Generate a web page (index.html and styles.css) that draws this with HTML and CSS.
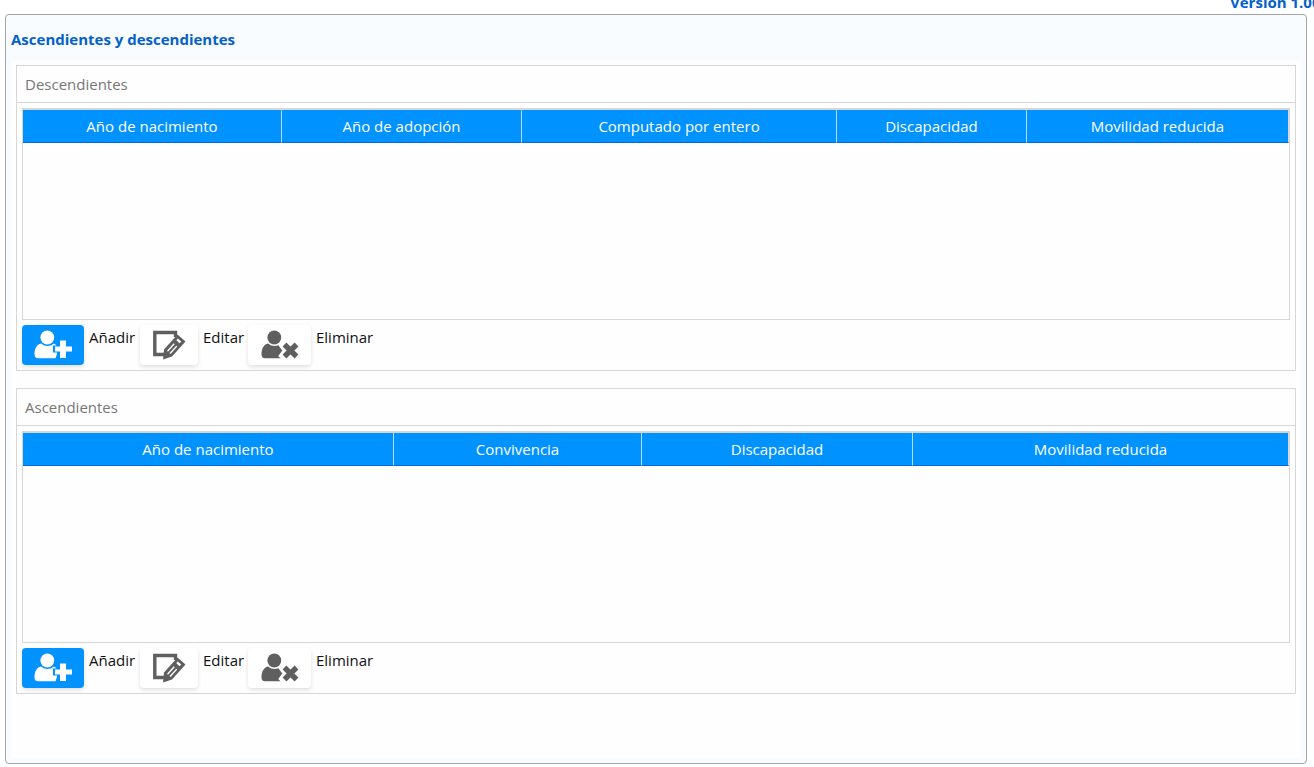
FILE: index.html
```html
<!DOCTYPE html>
<html lang="es">
<head>
<meta charset="utf-8">
<title>Ascendientes y descendientes</title>
<link rel="stylesheet" href="styles.css">
</head>
<body>
<svg class="defs" aria-hidden="true">
  <symbol id="user" viewBox="0 0 38 30">
    <ellipse cx="13.300" cy="7.500" rx="6.900" ry="7"/>
    <path d="M7 13.500C2.500 14.500 .5 19 .5 24.500Q.5 28.200 4 28.200H21.500L23 24V17Q22 14.200 20 13.500Q13.500 18.500 7 13.500Z"/>
  </symbol>
  <symbol id="add" viewBox="0 0 38 30">
    <use href="#user"/>
    <path class="halo" d="M26 10.500h6v6h6v5h-6v6.500h-6v-6.500h-6v-5h6z"/>
    <path d="M26 10.500h6v6h6v5h-6v6.500h-6v-6.500h-5v-5h5z"/>
  </symbol>
  <symbol id="edit" viewBox="0 0 34 30">
    <path d="M13 24.500H2.800V2.500H23.500V7" fill="none" stroke="currentColor" stroke-width="3.400"/>
    <path d="M25.500 4.500L33.500 11.500L20 26.500L11 29.500L12 19.500Z"/>
    <path class="gap" d="M25.800 8.600L24.300 10.300L27.600 13.300L29.200 11.600ZM21.700 13.300L15 20.800L16 21.700L22.700 14.200ZM24.200 15.700L17.500 23.100L18.600 24L25.300 16.600Z"/>
  </symbol>
  <symbol id="remove" viewBox="0 0 38 30">
    <use href="#user"/>
    <path class="halo" d="M18.500 15L22 11.500L27 16V25L22.500 30L18.500 26L22.500 20.500Z" stroke-width="0"/>
    <path d="M23.500 14.500L35.500 26.500M35.500 14.500L23.500 26.500" stroke="currentColor" stroke-width="5.400"/>
  </symbol>
</svg>
<header class="topbar"><span class="version">Versión 1.00</span></header>
<main class="panel">
  <h1 class="title">Ascendientes y descendientes</h1>
  <div class="content">
    <section class="group">
      <h2 class="group-title">Descendientes</h2>
      <div class="group-body">
        <div class="grid">
          <table class="table descendants">
            <thead><tr><th>Año de nacimiento</th><th>Año de adopción</th><th>Computado por entero</th><th>Discapacidad</th><th>Movilidad reducida</th></tr></thead>
          </table>
        </div>
        <div class="actions">
          <button class="btn primary" id="d-add" aria-labelledby="d-add-l"><svg class="icon"><use href="#add"/></svg></button>
          <label class="add-label" id="d-add-l" for="d-add">Añadir</label>
          <button class="btn edit" id="d-edit" aria-labelledby="d-edit-l"><svg class="icon narrow"><use href="#edit"/></svg></button>
          <label class="edit-label" id="d-edit-l" for="d-edit">Editar</label>
          <button class="btn" id="d-del" aria-labelledby="d-del-l"><svg class="icon"><use href="#remove"/></svg></button>
          <label id="d-del-l" for="d-del">Eliminar</label>
        </div>
      </div>
    </section>
    <section class="group">
      <h2 class="group-title">Ascendientes</h2>
      <div class="group-body">
        <div class="grid">
          <table class="table ascendants">
            <thead><tr><th>Año de nacimiento</th><th>Convivencia</th><th>Discapacidad</th><th>Movilidad reducida</th></tr></thead>
          </table>
        </div>
        <div class="actions">
          <button class="btn primary" id="a-add" aria-labelledby="a-add-l"><svg class="icon"><use href="#add"/></svg></button>
          <label class="add-label" id="a-add-l" for="a-add">Añadir</label>
          <button class="btn edit" id="a-edit" aria-labelledby="a-edit-l"><svg class="icon narrow"><use href="#edit"/></svg></button>
          <label class="edit-label" id="a-edit-l" for="a-edit">Editar</label>
          <button class="btn" id="a-del" aria-labelledby="a-del-l"><svg class="icon"><use href="#remove"/></svg></button>
          <label id="a-del-l" for="a-del">Eliminar</label>
        </div>
      </div>
    </section>
  </div>
</main>
</body>
</html>
```
FILE: styles.css
```css
* { box-sizing: border-box; }
body {
  margin: 0;
  min-height: 100vh;
  display: flex;
  flex-direction: column;
  overflow: hidden;
  background: #fff;
  color: #111;
  font: 15px/24px "Open Sans", "Noto Sans", sans-serif;
}
.defs { position: absolute; width: 0; height: 0; }
.topbar {
  height: 14px;
  display: flex;
  justify-content: flex-end;
  align-items: flex-end;
  overflow: hidden;
}
.version {
  width: 84px;
  white-space: nowrap;
  font-weight: 700;
  color: #0560c9;
}
.panel {
  flex: 1;
  display: flex;
  flex-direction: column;
  margin: 0 7px 3px 5px;
  padding: 0 5px 5px;
  border: 1px solid #a3a5a8;
  border-radius: 4px;
  background: #f8fcff;
}
.title {
  margin: 0;
  padding: 12px 0 9px;
  font-size: 15px;
  font-weight: 700;
  color: #0560c9;
}
.content {
  flex: 1;
  display: flex;
  flex-direction: column;
  gap: 17px;
  padding: 5px;
  background: #fefefe;
}
.group { border: 1px solid #d6d6d6; }
.group-title {
  margin: 0;
  padding: 6px 8px;
  border-bottom: 1px solid #d6d6d6;
  font-size: 15px;
  font-weight: 400;
  color: #777;
}
.group-body { padding: 5px; }
.grid {
  height: 212px;
  border: 1px solid #d6d6d6;
  border-top-width: 2px;
}
.table {
  width: 100%;
  table-layout: fixed;
  border-collapse: separate;
  border-spacing: 0;
}
.table th {
  height: 33px;
  padding: 0;
  border-right: 1px solid #b8dcf8;
  border-bottom: 1px solid #0468e0;
  background: #0092ff;
  color: #fff;
  font-weight: 400;
}
.table th:last-child { border-right-color: #d6d6d6; }
.descendants th:nth-child(1) { width: 20.46%; }
.descendants th:nth-child(2) { width: 18.96%; }
.descendants th:nth-child(3) { width: 24.88%; }
.descendants th:nth-child(4) { width: 15%; }
.ascendants th:nth-child(1) { width: 29.3%; }
.ascendants th:nth-child(2) { width: 19.6%; }
.ascendants th:nth-child(3) { width: 21.4%; }
.actions {
  display: flex;
  gap: 5px;
  padding-top: 5px;
}
.btn {
  --halo: #fff;
  display: flex;
  align-items: center;
  justify-content: center;
  width: 63px;
  height: 40px;
  padding: 0;
  border: 0;
  border-radius: 4px;
  background: #fff;
  color: #5f5f5f;
  box-shadow: 0 2px 4px rgba(0, 0, 0, .12);
}
.primary {
  --halo: #0092ff;
  width: 62px;
  background: #0092ff;
  color: #fff;
}
.edit { width: 58px; }
.icon { width: 38px; height: 30px; fill: currentColor; }
.narrow { width: 34px; }
.halo { fill: var(--halo); stroke: var(--halo); stroke-width: 2; }
.gap { fill: var(--halo); }
.add-label { width: 46px; }
.edit-label { width: 40px; }
```
